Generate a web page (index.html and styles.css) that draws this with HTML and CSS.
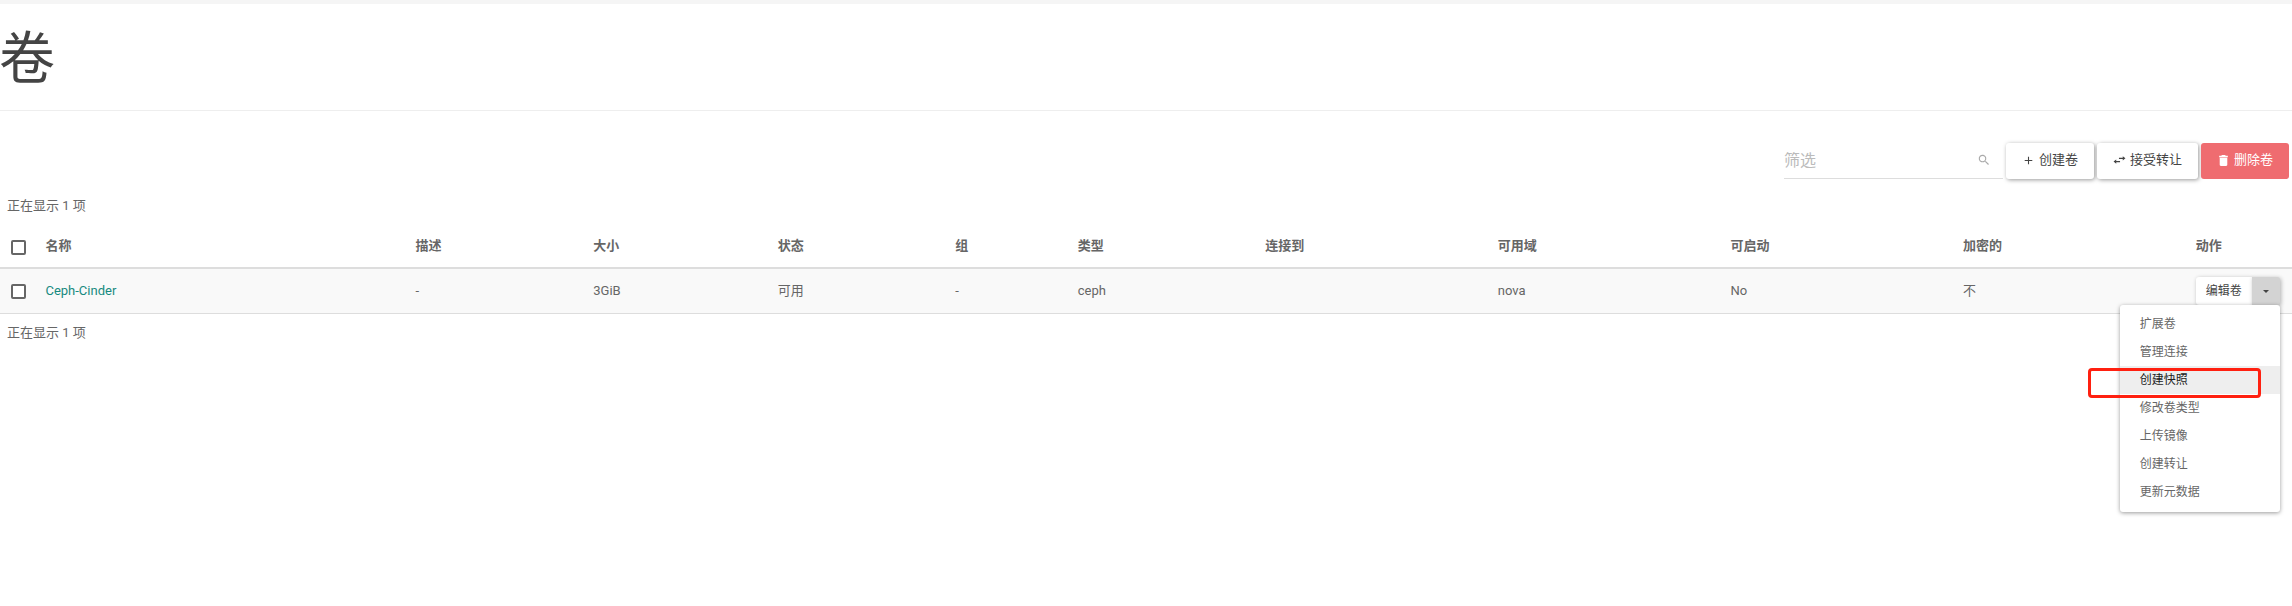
FILE: index.html
```html
<!DOCTYPE html>
<html lang="zh-CN">
<head>
<meta charset="utf-8">
<title>卷</title>
<link rel="stylesheet" href="styles.css">
</head>
<body>
<header class="page-header">
  <h1>卷</h1>
</header>
<main class="volumes">
  <form class="toolbar">
    <label class="filter">
      <input class="filter-input" type="text" placeholder="筛选" aria-label="筛选">
      <svg class="filter-icon" viewBox="0 0 24 24" aria-hidden="true"><path d="M15.5 14h-.8l-.3-.3A6.5 6.5 0 1 0 13.700 14.400l.3.3v.8l5 5 1.500-1.500-5-5zm-6 0a4.500 4.500 0 1 1 0-9 4.500 4.500 0 0 1 0 9z"/></svg>
    </label>
    <button class="btn" type="button"><svg class="icon" viewBox="0 0 24 24" aria-hidden="true"><path d="M19 13h-6v6h-2v-6H5v-2h6V5h2v6h6v2z"/></svg>创建卷</button>
    <button class="btn" type="button"><svg class="icon" viewBox="0 0 24 24" aria-hidden="true"><path d="M6 10l-5 4 5 4v-3h7v-2H6v-3zm17-2l-5-4v3h-7v2h7v3l5-4z"/></svg>接受转让</button>
    <button class="btn btn-danger" type="button"><svg class="icon" viewBox="0 0 24 24" aria-hidden="true"><path d="M5 20c0 1.100.9 2 2 2h10c1.100 0 2-.9 2-2V7H5v13zM20 3h-4l-1-1H9L8 3H4v3h16V3z"/></svg>删除卷</button>
  </form>
  <p class="count">正在显示 1 项</p>
  <table class="table">
    <colgroup>
      <col class="c-check"><col class="c-name"><col class="c-desc"><col class="c-size"><col class="c-status"><col class="c-group"><col class="c-type"><col class="c-wide"><col class="c-wide"><col class="c-wide"><col class="c-wide"><col class="c-action">
    </colgroup>
    <thead>
      <tr>
        <th class="check"><input type="checkbox" aria-label="全选"></th>
        <th>名称</th><th>描述</th><th>大小</th><th>状态</th><th>组</th><th>类型</th><th>连接到</th><th>可用域</th><th>可启动</th><th>加密的</th><th>动作</th>
      </tr>
    </thead>
    <tbody>
      <tr>
        <td class="check"><input type="checkbox" aria-label="Ceph-Cinder"></td>
        <td><a href="#">Ceph-Cinder</a></td>
        <td>-</td><td>3GiB</td><td>可用</td><td>-</td><td>ceph</td><td></td><td>nova</td><td>No</td><td>不</td>
        <td>
          <div class="actions">
            <button class="btn-small" type="button">编辑卷</button><button class="btn-small toggle" type="button" aria-label="更多动作" aria-expanded="true"><span class="caret"></span></button>
            <ul class="menu">
              <li><a href="#">扩展卷</a></li>
              <li><a href="#">管理连接</a></li>
              <li class="active"><a href="#">创建快照</a></li>
              <li><a href="#">修改卷类型</a></li>
              <li><a href="#">上传镜像</a></li>
              <li><a href="#">创建转让</a></li>
              <li><a href="#">更新元数据</a></li>
            </ul>
          </div>
        </td>
      </tr>
    </tbody>
  </table>
  <p class="count count-bottom">正在显示 1 项</p>
</main>
</body>
</html>
```
FILE: styles.css
```css
*, *::after { box-sizing: border-box; }

body {
  min-height: 100vh;
  margin: 0;
  border-top: 4px solid #f5f5f5;
  background: #fff;
  color: #666;
  font: 13px/20px Roboto, "Noto Sans CJK SC", sans-serif;
}

.page-header {
  padding: 20px 0 15px;
  border-bottom: 1px solid #eee;
}

h1 {
  margin: 0 0 0 -1px;
  color: #444;
  font-size: 56px;
  font-weight: 400;
  line-height: 71px;
}

.toolbar {
  display: flex;
  justify-content: flex-end;
  gap: 3px;
  padding: 32px 3px 0 0;
}

.filter {
  position: relative;
  width: 219px;
}

.filter-input {
  width: 100%;
  height: 36px;
  padding: 0 32px 0 0;
  border: 0;
  border-bottom: 1px solid #ddd;
  background: transparent;
  color: #666;
  font: inherit;
  font-size: 16px;
}

.filter-input::placeholder { color: #bbb; }

.filter-icon {
  position: absolute;
  top: 10px;
  right: 12px;
  width: 14px;
  height: 14px;
  fill: #aaa;
}

.btn {
  display: flex;
  align-items: center;
  gap: 4px;
  height: 36px;
  padding: 0 16px 2px;
  border: 0;
  border-radius: 3px;
  background: #fff;
  box-shadow: 1px 1px 4px rgba(0, 0, 0, 0.4);
  color: #444;
  font: inherit;
}

.btn-danger {
  background: #ef6c70;
  box-shadow: none;
  color: #fff;
}

.icon {
  width: 13px;
  height: 13px;
  fill: currentColor;
}

.count {
  margin: 0;
  padding: 17px 7px 7px;
}

.count-bottom { padding-top: 9px; }

.table {
  width: 100%;
  border-collapse: separate;
  border-spacing: 0;
  table-layout: fixed;
}

.c-check { width: 37px; }
.c-name { width: 16.15%; }
.c-desc { width: 7.75%; }
.c-size { width: 8.05%; }
.c-status { width: 7.75%; }
.c-group { width: 5.34%; }
.c-type { width: 8.18%; }
.c-wide { width: 10.15%; }
.c-action { width: 103px; }

th, td {
  height: 45px;
  padding: 8px;
  text-align: left;
  vertical-align: middle;
}

th {
  height: 46px;
  padding: 3px 8px 1px;
  border-bottom: 2px solid #ddd;
  font-weight: 700;
}

td {
  border-bottom: 1px solid #ddd;
  background: #f9f9f9;
}

.table a { color: #178a80; text-decoration: none; }

.table .check { padding-left: 11px; }

th.check { padding-top: 5px; }

.check input {
  display: block;
  width: 15px;
  height: 15px;
  margin: 0;
  border: 2px solid #666;
  border-radius: 2px;
  background: #fff;
  appearance: none;
}

.actions {
  position: relative;
  display: flex;
  width: 84px;
}

.btn-small {
  height: 28px;
  padding: 0 10px;
  border: 0;
  border-radius: 3px 0 0 3px;
  background: #fff;
  box-shadow: 1px 1px 4px rgba(0, 0, 0, 0.3);
  color: #444;
  font: inherit;
  font-size: 12px;
  white-space: nowrap;
}

.toggle {
  display: grid;
  flex: 1;
  place-items: center;
  border-radius: 0 3px 3px 0;
  background: #d3d3d3;
}

.caret {
  border: 3px solid transparent;
  border-top-color: #444;
  border-bottom: 0;
}

.menu {
  position: absolute;
  top: 100%;
  right: 0;
  z-index: 1;
  width: 160px;
  margin: 0;
  padding: 5px 0 6px;
  border-radius: 3px;
  background: #fff;
  box-shadow: 0 1px 4px rgba(0, 0, 0, 0.4);
  font-size: 12px;
  list-style: none;
}

.menu .active { position: relative; background: #eee; }

.menu a {
  display: block;
  padding: 4px 20px;
  color: #666;
}

.menu .active a { color: #222; }

.menu .active::after {
  content: "";
  position: absolute;
  top: 2px;
  right: 19px;
  left: -32px;
  height: 30px;
  border: 3px solid #ff2010;
  border-radius: 4px;
  pointer-events: none;
}
```
